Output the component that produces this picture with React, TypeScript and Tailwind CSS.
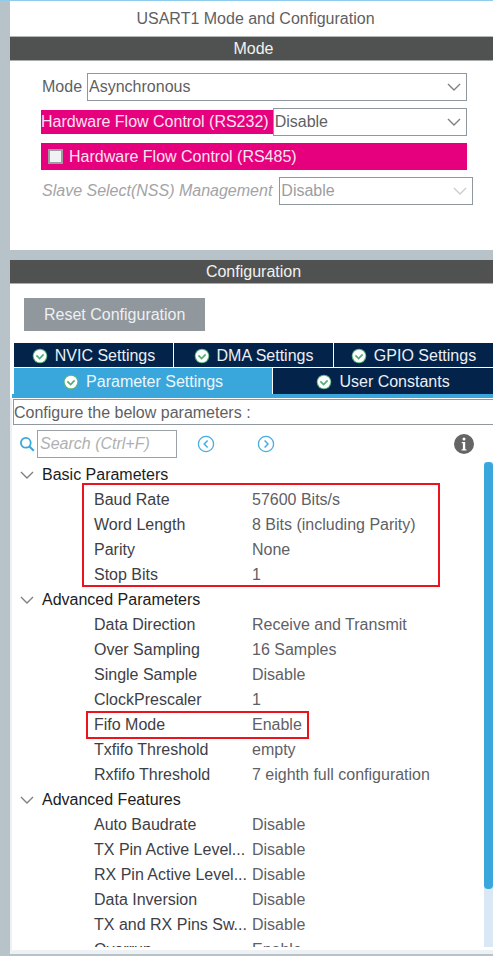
import { useState } from "react";
import type { ReactNode } from "react";

type Param = { name: string; value: string; marked?: boolean };
type Group = { title: string; marked?: boolean; params: Param[] };

const groups: Group[] = [
  {
    title: "Basic Parameters",
    marked: true,
    params: [
      { name: "Baud Rate", value: "57600 Bits/s" },
      { name: "Word Length", value: "8 Bits (including Parity)" },
      { name: "Parity", value: "None" },
      { name: "Stop Bits", value: "1" },
    ],
  },
  {
    title: "Advanced Parameters",
    params: [
      { name: "Data Direction", value: "Receive and Transmit" },
      { name: "Over Sampling", value: "16 Samples" },
      { name: "Single Sample", value: "Disable" },
      { name: "ClockPrescaler", value: "1" },
      { name: "Fifo Mode", value: "Enable", marked: true },
      { name: "Txfifo Threshold", value: "empty" },
      { name: "Rxfifo Threshold", value: "7 eighth full configuration" },
    ],
  },
  {
    title: "Advanced Features",
    params: [
      { name: "Auto Baudrate", value: "Disable" },
      { name: "TX Pin Active Level...", value: "Disable" },
      { name: "RX Pin Active Level...", value: "Disable" },
      { name: "Data Inversion", value: "Disable" },
      { name: "TX and RX Pins Sw...", value: "Disable" },
      { name: "Overrun", value: "Enable" },
    ],
  },
];

function Chevron({ className = "" }: { className?: string }) {
  return (
    <svg viewBox="0 0 14 8" className={`h-2 w-3.5 ${className}`} fill="none" stroke="currentColor" strokeWidth="1.4" aria-hidden="true">
      <path d="M1 1l6 6 6-6" />
    </svg>
  );
}

function CheckBadge() {
  return (
    <svg viewBox="0 0 16 16" className="size-4 shrink-0" fill="none" aria-hidden="true">
      <circle cx="8" cy="8" r="7.3" fill="#5fb57f" />
      <circle cx="8" cy="8" r="6.3" fill="#fff" />
      <path d="M4.4 7.400l3.200 3.200 4-4.200" stroke="#4fae74" strokeWidth="1.6" />
    </svg>
  );
}

function Combo({ id, value, disabled = false }: { id: string; value: string; disabled?: boolean }) {
  return (
    <div className="relative min-w-0 flex-1">
      <select
        id={id}
        disabled={disabled}
        defaultValue={value}
        className="block h-7 w-full appearance-none border border-[#8f989e] bg-white pr-6 pl-px text-[#5f5f63] opacity-100 disabled:text-[#9d9da0]"
      >
        <option>{value}</option>
      </select>
      <Chevron className={`pointer-events-none absolute top-2.5 right-1.5 ${disabled ? "text-[#cccccc]" : "text-[#808080]"}`} />
    </div>
  );
}

function SectionBar({ children }: { children: ReactNode }) {
  return (
    <h2 className="h-6 border-b border-[#a9adad] bg-[#4f5250] pl-1 text-center leading-6 text-[#f1f1f1]">{children}</h2>
  );
}

function Tab({ label, active = false, className = "" }: { label: string; active?: boolean; className?: string }) {
  return (
    <button
      type="button"
      role="tab"
      aria-selected={active}
      className={`flex items-center justify-center gap-[7px] pt-0.5 whitespace-nowrap ${active ? "bg-[#3aa7dc] text-[#edf6fb]" : "bg-[#03234b] text-[#eceff3]"} ${className}`}
    >
      <CheckBadge />
      {label}
    </button>
  );
}

function ParameterGroup({ group }: { group: Group }) {
  const [open, setOpen] = useState(true);
  return (
    <tbody className="relative">
      <tr className="h-[25px]">
        <th colSpan={2} className="p-0 text-left font-normal">
          <button type="button" aria-expanded={open} onClick={() => setOpen(!open)} className="flex items-center gap-2 pl-2 leading-[25px] text-[#1c1c22]">
            <Chevron className={open ? "text-[#808080]" : "-rotate-90 text-[#808080]"} />
            {group.title}
          </button>
          {group.marked && open && (
            <span className="pointer-events-none absolute top-[21px] left-[70px] h-[104px] w-[358px] border-2 border-[#ec131d]" />
          )}
        </th>
      </tr>
      {open &&
        group.params.map((p) => (
          <tr key={p.name} className="relative h-[25px] leading-[25px] whitespace-nowrap">
            <th scope="row" className="p-0 pl-[82px] text-left font-normal text-[#3e3e46]">
              {p.name}
              {p.marked && (
                <span className="pointer-events-none absolute -top-px left-[74px] h-7 w-[223px] border-2 border-[#ec131d]" />
              )}
            </th>
            <td className="p-0 text-[#5f5f66]">{p.value}</td>
          </tr>
        ))}
    </tbody>
  );
}

export default function App() {
  return (
    <div className="flex h-screen flex-col bg-white pb-[7px] font-['Liberation_Sans',Arial,sans-serif] text-base text-[#5f5f63]">
      <main className="flex min-h-0 flex-1 flex-col gap-2.5 border-t border-b-2 border-t-[#8fcbea] border-b-[#b8c3c9] bg-[#b8c3c9] pl-2.5">
        <section className="bg-white pb-[45px]">
          <h1 className="border-b border-[#b5b8b8] pl-2 text-center leading-[35px]">USART1 Mode and Configuration</h1>
          <SectionBar>Mode</SectionBar>
          <div className="flex flex-col gap-[7px] pt-3 pr-[26px] pl-[31px]">
            <div className="flex items-center">
              <label htmlFor="mode" className="pr-[5px] pl-px">Mode</label>
              <Combo id="mode" value="Asynchronous" />
            </div>
            <div className="flex items-center">
              <label htmlFor="rs232" className="bg-[#e6007e] pr-1 leading-6 whitespace-nowrap text-[#fbe3f0]">
                Hardware Flow Control (RS232)
              </label>
              <Combo id="rs232" value="Disable" />
            </div>
            <label className="flex h-[27px] items-center gap-1.5 bg-[#e6007e] pl-[7px] text-[#fbe3f0]">
              <input type="checkbox" className="size-[15px] appearance-none border-2 border-[#9a9fa4] bg-[#f0f2f3] checked:bg-[#3aa7dc]" />
              Hardware Flow Control (RS485)
            </label>
            <div className="-mr-1.5 flex items-center">
              <label htmlFor="nss" className="pr-[7px] pl-px whitespace-nowrap text-[#a3a3a6] italic">
                Slave Select(NSS) Management
              </label>
              <Combo id="nss" value="Disable" disabled />
            </div>
          </div>
        </section>

        <section className="flex min-h-0 flex-1 flex-col bg-white">
          <SectionBar>Configuration</SectionBar>
          <div className="px-3.5 pt-3.5 pb-3">
            <button type="button" className="h-[33px] bg-[#90979d] px-5 text-[#eef0f1]">Reset Configuration</button>
          </div>
          <div role="tablist" className="ml-0.5 border-b-4 border-[#3aa7dc] pl-0.5">
            <div className="grid grid-cols-3 gap-px pb-px">
              <Tab label="NVIC Settings" className="h-6" />
              <Tab label="DMA Settings" className="h-6" />
              <Tab label="GPIO Settings" className="h-6" />
            </div>
            <div className="flex gap-px">
              <Tab label="Parameter Settings" active className="h-[26px] grow-[54] basis-0" />
              <Tab label="User Constants" className="h-[26px] grow-[46] basis-0" />
            </div>
          </div>
          <div className="flex min-h-0 flex-1 flex-col border-b-4 border-l-2 border-[#eef1f3] pt-px">
            <p className="ml-px border border-r-0 border-[#8f989e] pt-0.5 leading-[22px]">Configure the below parameters :</p>
            <div className="flex items-center pt-[5px] pr-[19px] pb-1 pl-[7px]">
              <svg viewBox="0 0 16 16" className="size-4" fill="none" stroke="#3aa7dc" strokeWidth="1.8" aria-hidden="true">
                <circle cx="6.8" cy="6.8" r="4.9" />
                <path d="M10.4 10.4l4.4 4.4" strokeWidth="2.1" />
              </svg>
              <input
                type="text"
                aria-label="Search parameters"
                placeholder="Search (Ctrl+F)"
                className="ml-0.5 h-7 w-[140px] border border-[#9aa2a8] px-0.5 placeholder:text-[#b0b0b2] placeholder:italic"
              />
              <button type="button" aria-label="Previous match" className="ml-5">
                <svg viewBox="0 0 18 18" className="size-[18px]" fill="none" stroke="#45addf" strokeWidth="1.3">
                  <circle cx="9" cy="9" r="7.6" />
                  <path d="M10.6 5.4L7.2 9l3.4 3.6" strokeWidth="1.5" />
                </svg>
              </button>
              <button type="button" aria-label="Next match" className="ml-[42px]">
                <svg viewBox="0 0 18 18" className="size-[18px]" fill="none" stroke="#45addf" strokeWidth="1.3">
                  <circle cx="9" cy="9" r="7.6" />
                  <path d="M7.6 5.4L11 9l-3.4 3.6" strokeWidth="1.5" />
                </svg>
              </button>
              <button type="button" aria-label="Information" className="ml-auto">
                <svg viewBox="0 0 20 20" className="size-5">
                  <circle cx="10" cy="10" r="10" fill="#656565" />
                  <circle cx="10" cy="4.9" r="1.5" fill="#fff" />
                  <path d="M7.8 8h3.400v7.200h1.200v1.200H7.600v-1.200h1.300V9.200H7.800z" fill="#fff" />
                </svg>
              </button>
            </div>
            <div className="mb-[3px] flex min-h-0 flex-1">
              <div className="min-w-0 flex-1 overflow-hidden">
                <table className="w-full table-fixed border-collapse">
                  <colgroup>
                    <col className="w-60" />
                    <col />
                  </colgroup>
                  {groups.map((g) => (
                    <ParameterGroup key={g.title} group={g} />
                  ))}
                </table>
              </div>
              <div className="w-[9px] bg-[#dae8f5]">
                <div className="h-[88%] rounded bg-[#3aa7dc]" />
              </div>
            </div>
          </div>
        </section>
      </main>
    </div>
  );
}
